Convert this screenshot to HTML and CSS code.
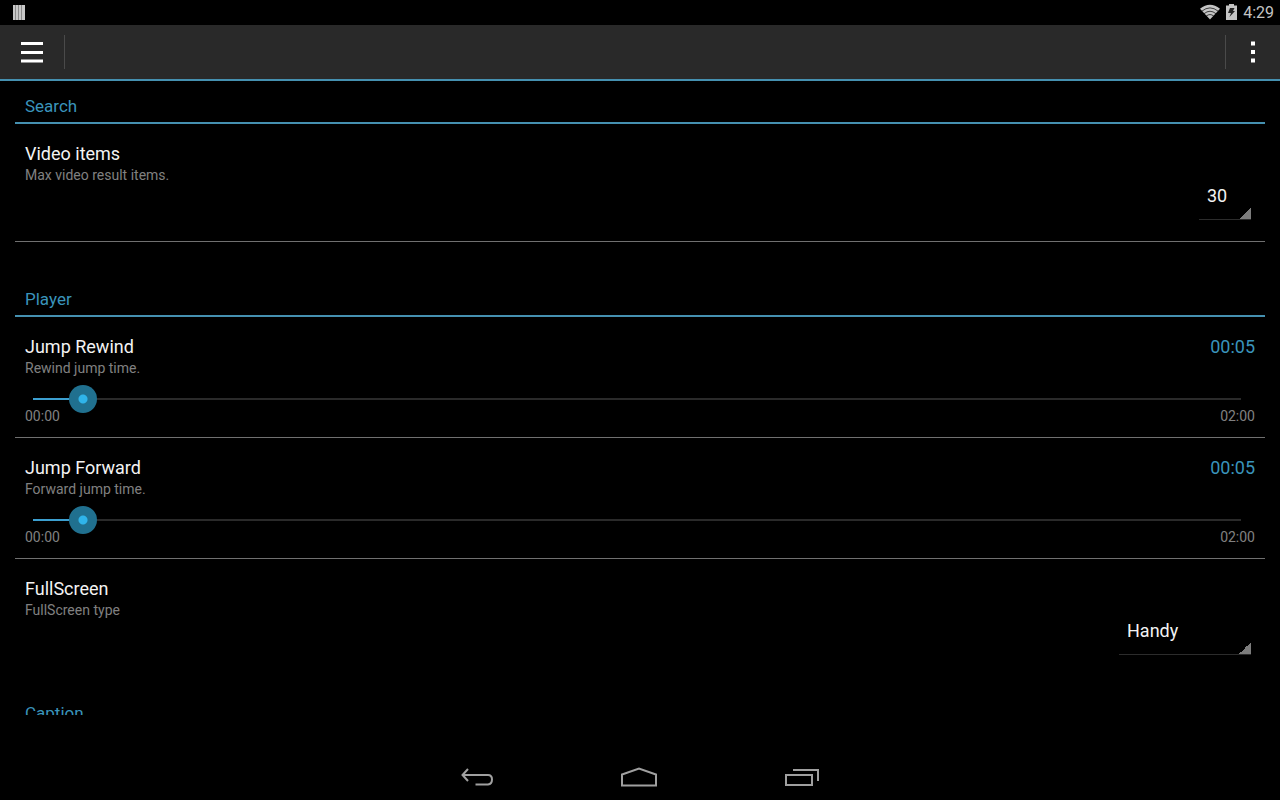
FILE: index.html
```html
<!DOCTYPE html>
<html lang="en">
<head>
    <meta charset="UTF-8">
    <meta name="viewport" content="width=device-width, initial-scale=1.0">
    <title>Settings</title>

    <link rel="stylesheet" href="styles.css">
</head>
<body>
    <div class="status-bar">
        <svg class="status-note" width="12" height="15" viewBox="0 0 12 15">
            <rect width="12" height="15" fill="#8a8a8a"/>
            <path d="M0 0h2v15h-2zM3 0h2v15h-2zM6 0h2v15h-2zM9 0h3v15h-3z" fill="#c8c8c8"/>
        </svg>
        <div class="status-icons">
            <svg width="20" height="16" viewBox="0 0 20 16">
                <path d="M0 4.800Q10-3.200 20 4.800L10 15.500Z" fill="#c4c4c4"/>
                <path d="M1.800 7.200Q10 0.600 18.200 7.200M4 9.700Q10 4.800 16 9.700M6.200 12.100Q10 9 13.800 12.100" fill="none" stroke="#000" stroke-width="0.700"/>
            </svg>
            <svg width="11" height="16" viewBox="0 0 11 16">
                <path d="M3 0h5v1.500h3V16H0V1.500h3z" fill="#c4c4c4"/>
                <path d="M4 4h4.500L7 7h2L3.500 13 5 9H2z" fill="#222"/>
            </svg>
            <span>4:29</span>
        </div>
    </div>

    <header class="toolbar">
        <button class="menu-button" type="button" aria-label="Menu">
            <svg width="22" height="22" viewBox="0 0 22 22">
                <path d="M0 1h22v3H0zM0 10h22v3H0zM0 18.500h22v3H0z" fill="#fff"/>
            </svg>
        </button>
        <span class="separator"></span>
        <span class="toolbar-space"></span>
        <span class="separator"></span>
        <button class="more-button" type="button" aria-label="More options">
            <svg width="4" height="22" viewBox="0 0 4 22">
                <path d="M0 0.500h4v4H0zM0 9h4v4H0zM0 17.500h4v4H0z" fill="#fff"/>
            </svg>
        </button>
    </header>

    <main class="settings">
        <section>
            <h2>Search</h2>
            <div class="item">
                <label class="item-title" for="video-items">Video items</label>
                <p>Max video result items.</p>
                <select id="video-items" class="spinner spinner-small">
                    <option>10</option>
                    <option>20</option>
                    <option selected>30</option>
                    <option>50</option>
                </select>
            </div>
        </section>

        <section class="player">
            <h2>Player</h2>
            <div class="item item-slider">
                <div class="item-head">
                    <label class="item-title" for="jump-rewind">Jump Rewind</label>
                    <output for="jump-rewind">00:05</output>
                </div>
                <p>Rewind jump time.</p>
                <input id="jump-rewind" type="range" min="0" max="120" value="5" style="--fill: 5">
                <div class="range-ends"><span>00:00</span><span>02:00</span></div>
            </div>
            <div class="item item-slider">
                <div class="item-head">
                    <label class="item-title" for="jump-forward">Jump Forward</label>
                    <output for="jump-forward">00:05</output>
                </div>
                <p>Forward jump time.</p>
                <input id="jump-forward" type="range" min="0" max="120" value="5" style="--fill: 5">
                <div class="range-ends"><span>00:00</span><span>02:00</span></div>
            </div>
            <div class="item">
                <label class="item-title" for="fullscreen">FullScreen</label>
                <p>FullScreen type</p>
                <select id="fullscreen" class="spinner spinner-large">
                    <option selected>Handy</option>
                </select>
            </div>
        </section>

        <section class="caption">
            <h2>Caption</h2>
        </section>
    </main>

    <nav class="nav-bar">
        <button type="button" aria-label="Back">
            <svg width="40" height="24" viewBox="0 0 40 24">
                <path d="M10 5L4.500 11 10 17M4.500 11H30Q34 11 34 15.500T30 20.500H17.500"/>
            </svg>
        </button>
        <button type="button" aria-label="Home">
            <svg width="40" height="24" viewBox="0 0 40 24">
                <path d="M2 21.500V10.500L19 4.500 36 10.500V21.500Z"/>
            </svg>
        </button>
        <button type="button" aria-label="Recent apps">
            <svg width="40" height="24" viewBox="0 0 40 24">
                <path d="M4 11H30V21H4ZM11 6H36V17"/>
            </svg>
        </button>
    </nav>

    <script>
        const _sliders = document.querySelectorAll("input[type='range']");

        function formatTime(seconds) {
            let min = Math.floor(seconds / 60).toString().padStart(2, "0");
            let sec = (seconds % 60).toString().padStart(2, "0");

            return min + ":" + sec;
        }

        for (let i = 0; i < _sliders.length; i++) {
            _sliders[i].addEventListener("input", event => {
                let slider = event.target;

                slider.style.setProperty("--fill", slider.value);
                document.querySelector("output[for='" + slider.id + "']").textContent = formatTime(slider.value);
            })
        }
    </script>
</body>
</html>
```
FILE: styles.css
```css
* {
    box-sizing: border-box;
}

body {
    display: flex;
    flex-direction: column;
    height: 100vh;
    margin: 0;
    background-color: #000;
    color: #f3f3f3;
    font-family: Roboto, "Noto Sans", sans-serif;
    font-size: 18px;
    line-height: 24px;
}

h2 {
    margin: 0;
    padding: 0 10px 5px;
    border-bottom: 2px solid #4590b0;
    color: #3a94bb;
    font-size: 17px;
    font-weight: 400;
    line-height: 22px;
}

p {
    margin: 0;
    color: #808080;
    font-size: 14px;
    line-height: 18px;
}

button {
    display: flex;
    align-items: center;
    justify-content: center;
    padding: 0;
    border: 0;
    background: none;
}

output {
    color: #3a94bb;
}

.status-bar {
    display: flex;
    flex: none;
    align-items: center;
    justify-content: space-between;
    height: 25px;
    padding: 0 6px 0 13px;
}

.status-icons {
    display: flex;
    align-items: center;
    gap: 6px;
    color: #c4c4c4;
    font-size: 16px;
}

.status-icons svg {
    margin-bottom: 2px;
}

.toolbar {
    display: flex;
    flex: none;
    align-items: center;
    height: 56px;
    border-bottom: 2px solid #4590b0;
    background-color: #292929;
}

.toolbar-space {
    flex: 1;
}

.separator {
    width: 1px;
    height: 34px;
    background-color: #4a4a4a;
}

.menu-button {
    width: 64px;
    height: 100%;
}

.more-button {
    width: 54px;
    height: 100%;
}

.settings {
    flex: 1;
    min-height: 0;
    margin-bottom: 37px;
    padding: 14px 15px 0;
    overflow: hidden;
}

.player {
    margin-top: 46px;
}

.caption {
    margin-top: 26px;
}

.item {
    display: flex;
    flex-direction: column;
    padding: 18px 10px 21px;
}

.item-slider {
    padding-bottom: 12px;
}

.item-slider,
.item:only-of-type {
    border-bottom: 1px solid #707070;
}

.item-head,
.range-ends {
    display: flex;
    justify-content: space-between;
}

.range-ends {
    color: #808080;
    font-size: 14px;
    line-height: 18px;
}

/* drop-downs */
.spinner {
    align-self: flex-end;
    margin: 0 4px 0 0;
    padding: 0 16px 11px 8px;
    border: 0;
    border-bottom: 1px solid #2c2c2c;
    border-radius: 0;
    appearance: none;
    background: linear-gradient(to bottom right, transparent 50%, #7c7c7c 50%) right bottom / 13px 13px no-repeat border-box;
    color: #f3f3f3;
    font: inherit;
}

.spinner option {
    background-color: #222;
}

.spinner-small {
    width: 52px;
}

.spinner-large {
    width: 132px;
}

/* sliders, the track is inset by half a thumb */
input[type="range"] {
    width: calc(100% + 6px);
    height: 28px;
    margin: 8px 0 -6px -6px;
    appearance: none;
    background:
        linear-gradient(#3c9fd0, #3c9fd0) 14px 13px / calc((100% - 28px) * var(--fill) / 120) 2px no-repeat,
        linear-gradient(#2a2a2a, #2a2a2a) 14px 13px / calc(100% - 28px) 2px no-repeat;
}

input[type="range"]::-webkit-slider-thumb {
    width: 28px;
    height: 28px;
    border-radius: 50%;
    appearance: none;
    background: radial-gradient(circle, #2fb4ea 4px, #20708f 5px);
}

.nav-bar {
    display: flex;
    flex: none;
    justify-content: center;
    height: 48px;
}

.nav-bar button {
    width: 162px;
}

.nav-bar svg {
    fill: none;
    stroke: #a0a0a0;
    stroke-width: 2;
}
```
